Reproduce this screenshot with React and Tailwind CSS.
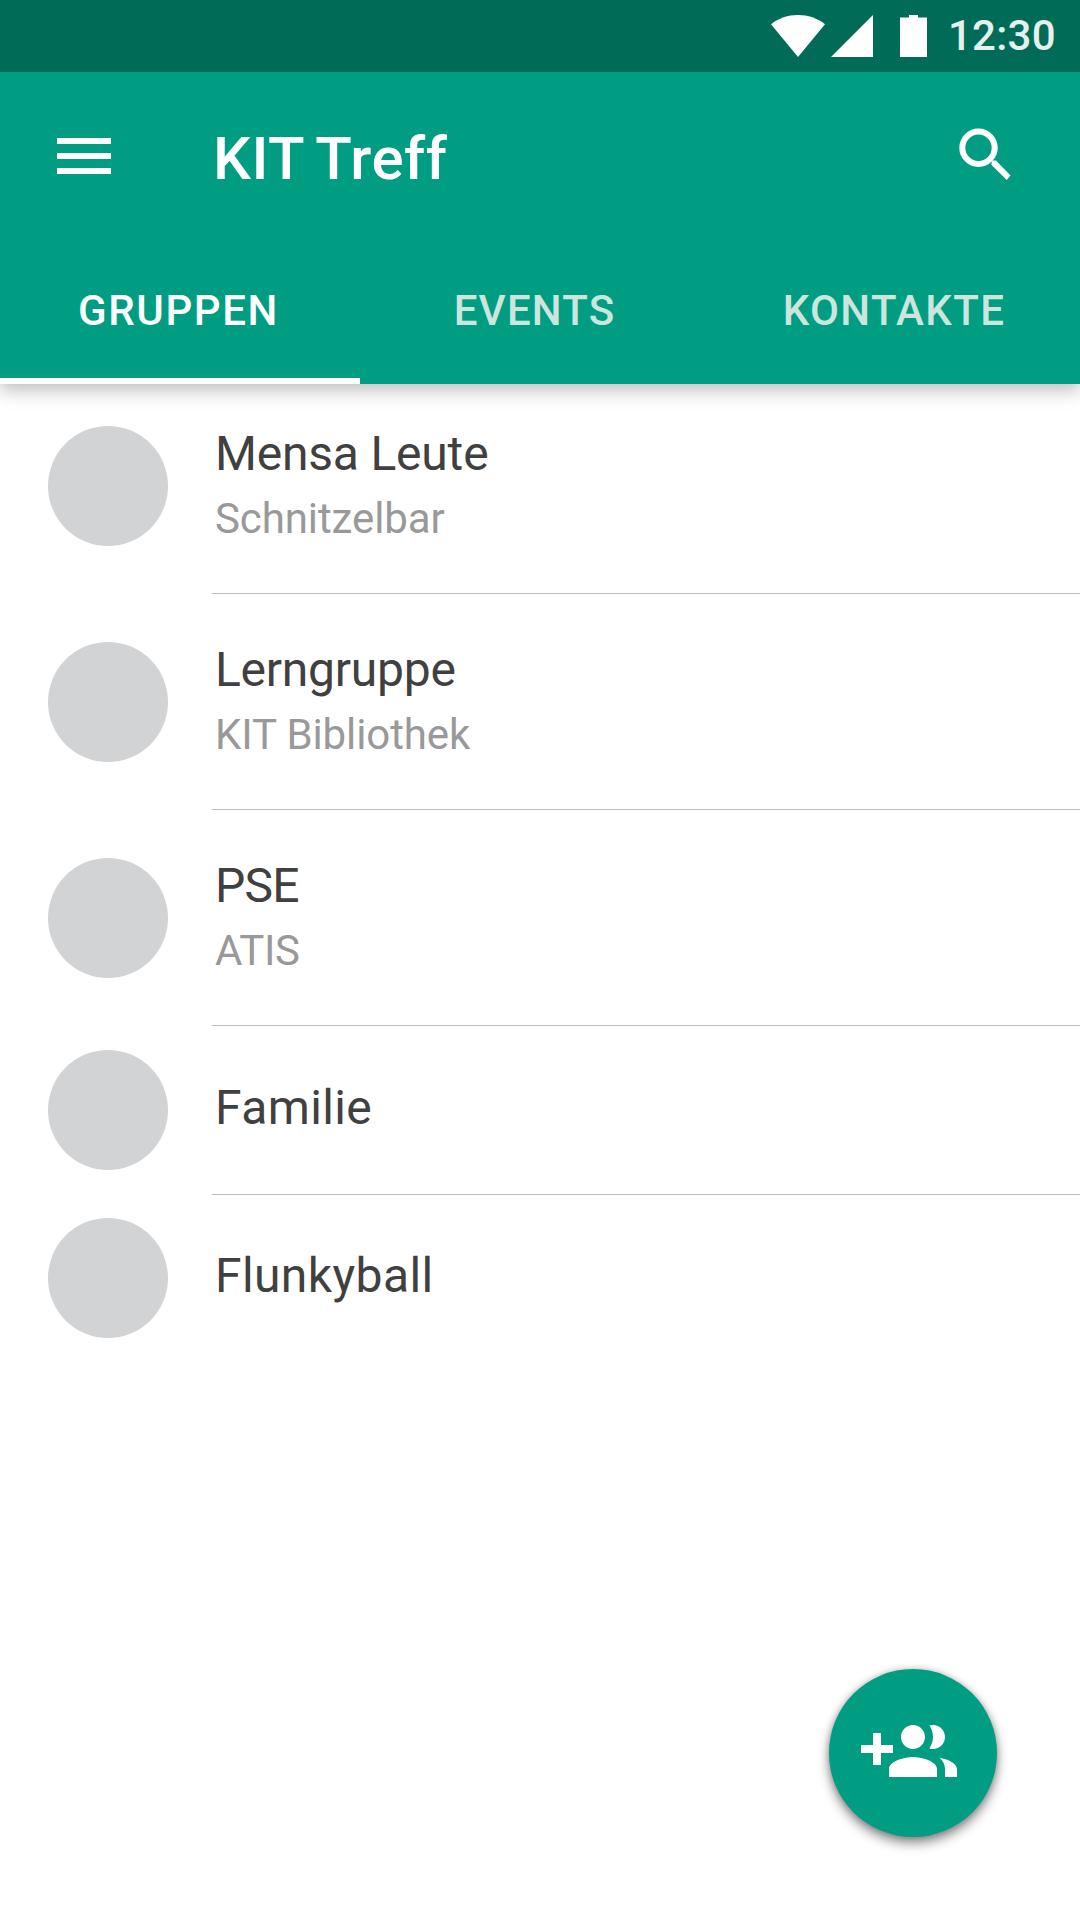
const groups = [
  { name: "Mensa Leute", place: "Schnitzelbar", nameTracking: "tracking-[-0.2px]", placeTracking: "tracking-[-0.1px]" },
  { name: "Lerngruppe", place: "KIT Bibliothek", nameTracking: "tracking-[-0.25px]", placeTracking: "tracking-[-0.1px]" },
  { name: "PSE", place: "ATIS", nameTracking: "tracking-[-0.8px]", placeTracking: "tracking-[-0.4px]" },
  { name: "Familie", nameTracking: "tracking-[0.4px]" },
  { name: "Flunkyball", nameTracking: "tracking-[0.4px]" },
];

function StatusBar() {
  return (
    <div className="flex h-[72px] items-start justify-end bg-[#006b57] pr-[24px] text-white">
      <svg className="mt-[15px] h-[42px] w-[54px]" viewBox="0 0 54 42" fill="currentColor">
        <path d="M27 42 0 9.2C7.6 3.2 17 0 27 0s19.4 3.2 27 9.2z" />
      </svg>
      <svg className="mt-[15px] ml-[6px] h-[42px] w-[42px]" viewBox="0 0 42 42" fill="currentColor">
        <path d="M42 0v42H0z" />
      </svg>
      <svg className="mt-[15px] ml-[27px] h-[42px] w-[27px]" viewBox="0 0 27 42" fill="currentColor">
        <path d="M9 0h9v2.5h9V42H0V2.5h9z" />
      </svg>
      <span className="ml-[21px] mt-[11px] w-[108px] whitespace-nowrap text-[42px] font-medium leading-[49px] tracking-[0.25px] text-white/90">
        12:30
      </span>
    </div>
  );
}

function AppBar() {
  return (
    <div className="flex h-[168px] items-center px-12">
      <button className="size-[72px]" aria-label="Menü">
        <svg className="size-[72px]" viewBox="0 0 24 24" fill="currentColor">
          <path d="M3 18h18v-2H3v2zm0-5h18v-2H3v2zm0-7v2h18V6H3z" />
        </svg>
      </button>
      <h1 className="ml-[93px] flex-1 pt-[6px] text-[60px] font-medium leading-[72px] tracking-[0.5px] [word-spacing:-2.5px]">
        KIT Treff
      </h1>
      <button className="mr-[10px] size-[72px]" aria-label="Suche">
        <svg className="size-[72px]" viewBox="0 0 24 24">
          <circle cx="9.5" cy="9.25" r="5.4" fill="none" stroke="currentColor" strokeWidth="2" />
          <path d="M14 13.5h1.3l4.9 5L18.9 20l-5.1-5.1z" fill="currentColor" />
        </svg>
      </button>
    </div>
  );
}

function Tabs() {
  return (
    <nav className="grid h-[144px] grid-cols-3 text-[42px] font-medium leading-[49px]">
      <button className="border-b-[6px] border-white pt-[2px] pr-[3px] tracking-[1.6px]">GRUPPEN</button>
      <button className="border-b-[6px] border-transparent pt-[2px] pr-[11px] tracking-[1.2px] text-[#cce6df]">EVENTS</button>
      <button className="border-b-[6px] border-transparent pt-[2px] pr-[12px] tracking-[1.4px] text-[#cce6df]">KONTAKTE</button>
    </nav>
  );
}

function GroupRow({ name, place, nameTracking, placeTracking, first, last }) {
  const height = place ? (first ? "h-[210px]" : "h-[216px]") : last ? "h-[168px]" : "h-[169px]";
  return (
    <li className={`flex ${height}`}>
      <div className={`flex w-[212px] pl-12 ${place ? "items-end pb-12" : last ? "items-start pt-[23px]" : "items-start pt-6"}`}>
        <div className="size-[120px] rounded-full bg-[#d1d3d4]" />
      </div>
      <div
        className={`flex flex-1 flex-col pl-[3px] ${
          place ? "justify-end pb-[50px]" : last ? "justify-start pt-[53px]" : "justify-start pt-[54px]"
        } ${last ? "" : "border-b border-[#bdbdbd]"}`}
      >
        <div className={`text-[48px] leading-[56px] text-[#404040] ${nameTracking}`}>{name}</div>
        {place && <div className={`mt-[12px] text-[42px] leading-[49px] text-[#999999] ${placeTracking}`}>{place}</div>}
      </div>
    </li>
  );
}

export default function App() {
  return (
    <div className="relative h-[1920px] w-[1080px] overflow-hidden bg-white font-['Roboto',sans-serif]">
      <header className="relative z-10 bg-[#009d83] text-white shadow-[0_6px_18px_rgba(0,0,0,0.27)]">
        <StatusBar />
        <AppBar />
        <Tabs />
      </header>
      <ul>
        {groups.map((g, i) => (
          <GroupRow key={g.name} {...g} first={i === 0} last={i === groups.length - 1} />
        ))}
      </ul>
      <button
        className="absolute top-[1669px] left-[829px] flex size-[168px] items-center justify-center rounded-full bg-[#009d83] pr-[8px] text-white shadow-[0_6px_12px_rgba(0,0,0,0.45),0_0_6px_rgba(0,0,0,0.2)]"
        aria-label="Gruppe hinzufügen"
      >
        <svg className="size-[96px]" viewBox="0 0 24 24" fill="currentColor">
          <path d="M8 10H5V7H3v3H0v2h3v3h2v-3h3v-2zm10 1c1.66 0 2.99-1.34 2.99-3S19.66 5 18 5c-.32 0-.63.05-.91.14.57.81.9 1.79.9 2.86s-.34 2.04-.9 2.86c.28.09.59.14.91.14zm-5 0c1.66 0 2.99-1.34 2.99-3S14.66 5 13 5c-1.66 0-3 1.34-3 3s1.34 3 3 3zm6.62 2.16c.83.73 1.38 1.66 1.38 2.84v2h3v-2c0-1.54-2.37-2.49-4.38-2.84zM13 13c-2 0-6 1-6 3v2h12v-2c0-2-4-3-6-3z" />
        </svg>
      </button>
    </div>
  );
}
